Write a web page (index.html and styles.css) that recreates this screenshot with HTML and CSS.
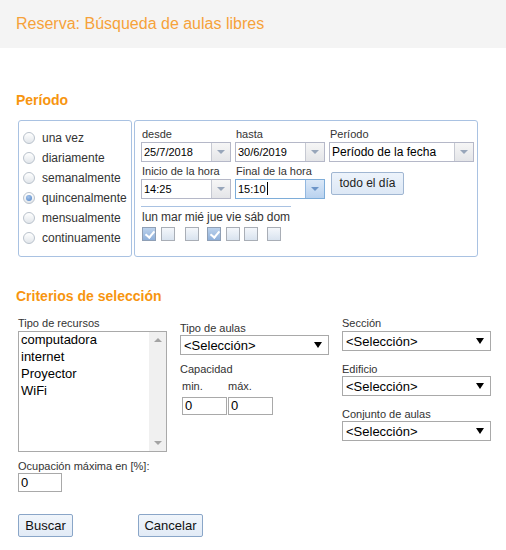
FILE: index.html
```html
<!DOCTYPE html>
<html lang="es">
<head>
<meta charset="utf-8">
<title>Reserva</title>
<link rel="stylesheet" href="styles.css">
</head>
<body>
<div class="header"><h1 class="title">Reserva: Búsqueda de aulas libres</h1></div>

<h2 class="section-title first">Período</h2>
<div class="period-row">
  <div class="box radio-box">
    <label class="radio-item"><span class="radio"></span>una vez</label>
    <label class="radio-item"><span class="radio"></span>diariamente</label>
    <label class="radio-item"><span class="radio"></span>semanalmente</label>
    <label class="radio-item"><span class="radio checked"></span>quincenalmente</label>
    <label class="radio-item"><span class="radio"></span>mensualmente</label>
    <label class="radio-item"><span class="radio"></span>continuamente</label>
  </div>
  <div class="box fields-box">
    <div class="fields-grid">
      <div class="field">
        <div class="flabel">desde</div>
        <div class="combo"><span class="combo-text">25/7/2018</span><span class="combo-btn"><span class="tri"></span></span></div>
      </div>
      <div class="field">
        <div class="flabel">hasta</div>
        <div class="combo"><span class="combo-text">30/6/2019</span><span class="combo-btn"><span class="tri"></span></span></div>
      </div>
      <div class="field">
        <div class="flabel">Período</div>
        <div class="combo"><span class="combo-text big">Período de la fecha</span><span class="combo-btn"><span class="tri"></span></span></div>
      </div>
      <div class="field">
        <div class="flabel">Inicio de la hora</div>
        <div class="combo"><span class="combo-text">14:25</span><span class="combo-btn"><span class="tri"></span></span></div>
      </div>
      <div class="field">
        <div class="flabel">Final de la hora</div>
        <div class="combo focus"><span class="combo-text">15:10<span class="caret"></span></span><span class="combo-btn"><span class="tri"></span></span></div>
      </div>
      <div class="field">
        <button class="btn-day" type="button">todo el día</button>
      </div>
    </div>
    <div class="separator"></div>
    <div class="days">
      <span class="day">lun</span><span class="cb checked"></span>
      <span class="day">mar</span><span class="cb"></span>
      <span class="day">mié</span><span class="cb"></span>
      <span class="day">jue</span><span class="cb checked"></span>
      <span class="day">vie</span><span class="cb"></span>
      <span class="day">sáb</span><span class="cb"></span>
      <span class="day">dom</span><span class="cb"></span>
    </div>
  </div>
</div>

<h2 class="section-title second">Criterios de selección</h2>
<div class="criteria">
  <div class="col col-a">
    <div class="slabel">Tipo de recursos</div>
    <div class="listbox">
      <div class="list-items">
        <div>computadora</div>
        <div>internet</div>
        <div>Proyector</div>
        <div>WiFi</div>
      </div>
      <div class="scrollbar"><span class="sarrow up"></span><span class="sarrow down"></span></div>
    </div>
  </div>
  <div class="col col-b">
    <div class="slabel">Tipo de aulas</div>
    <div class="select"><span>&lt;Selección&gt;</span><span class="sel-arrow"></span></div>
    <div class="slabel cap">Capacidad</div>
    <div class="minmax">
      <div class="mm"><div class="slabel">min.</div><div class="input">0</div></div>
      <div class="mm"><div class="slabel">máx.</div><div class="input">0</div></div>
    </div>
  </div>
  <div class="col col-c">
    <div class="slabel">Sección</div>
    <div class="select"><span>&lt;Selección&gt;</span><span class="sel-arrow"></span></div>
    <div class="slabel gap">Edificio</div>
    <div class="select"><span>&lt;Selección&gt;</span><span class="sel-arrow"></span></div>
    <div class="slabel gap">Conjunto de aulas</div>
    <div class="select"><span>&lt;Selección&gt;</span><span class="sel-arrow"></span></div>
  </div>
</div>

<div class="occupancy">
  <div class="slabel">Ocupación máxima en [%]:</div>
  <div class="input occ">0</div>
</div>

<div class="actions">
  <button class="btn" type="button">Buscar</button>
  <button class="btn cancel" type="button">Cancelar</button>
</div>
</body>
</html>
```
FILE: styles.css
```css
* { box-sizing: border-box; }
body {
  margin: 0;
  font-family: "Liberation Sans", Arial, sans-serif;
  color: #333;
  background: #fff;
}
.header {
  height: 48px;
  background: #f4f4f4;
  padding-left: 16px;
}
.title {
  margin: 0;
  font-size: 16px;
  font-weight: normal;
  line-height: 48px;
  color: #f6a23a;
}
.section-title {
  margin: 0 0 0 16px;
  font-size: 14px;
  font-weight: bold;
  line-height: 16px;
  color: #f7950f;
}
.section-title.first { margin-top: 44px; margin-bottom: 12px; }
.section-title.second { margin-top: 31px; margin-bottom: 12px; }

.period-row {
  display: flex;
  gap: 2px;
  margin-left: 18px;
  height: 137px;
}
.box {
  border: 1px solid #a9c2e2;
  border-radius: 3px;
}
.radio-box {
  width: 114px;
  padding: 7px 0 0 4px;
}
.radio-item {
  display: flex;
  align-items: center;
  height: 20px;
  font-size: 12px;
  color: #333;
}
.radio {
  width: 12px;
  height: 12px;
  border-radius: 50%;
  border: 1px solid #b9c2cc;
  background: linear-gradient(#ffffff, #e2e6eb);
  margin-right: 7px;
  position: relative;
  flex: none;
}
.radio.checked::after {
  content: "";
  position: absolute;
  left: 2px;
  top: 2px;
  width: 6px;
  height: 6px;
  border-radius: 50%;
  background: radial-gradient(circle at 40% 35%, #a6c4ea, #4f83c6);
}
.fields-box {
  width: 344px;
  padding: 6px 0 0 6px;
}
.fields-grid {
  display: grid;
  grid-template-columns: 90px 90px 145px;
  column-gap: 4px;
  row-gap: 2px;
}
.flabel {
  font-size: 11px;
  line-height: 15px;
  padding-left: 1px;
  color: #333;
}
.combo {
  display: flex;
  height: 20px;
  border: 1px solid #b5b8c8;
  background: #fff;
}
.combo-text {
  flex: 1;
  font-size: 11px;
  line-height: 18px;
  padding-left: 2px;
  color: #000;
  white-space: nowrap;
  overflow: hidden;
}
.combo-text.big { font-size: 12px; }
.combo-btn {
  width: 19px;
  border-left: 1px solid #c6c9d2;
  background: linear-gradient(#f6f6f6, #e4e5e8);
  display: flex;
  align-items: center;
  justify-content: center;
}
.tri {
  width: 0;
  height: 0;
  border-left: 4px solid transparent;
  border-right: 4px solid transparent;
  border-top: 4px solid #98a6ba;
}
.combo.focus { border-color: #7eadd9; }
.combo.focus .combo-btn {
  border-left-color: #93b8e0;
  background: linear-gradient(#dbe8f7, #b9d2ef);
}
.combo.focus .tri { border-top-color: #6d95c8; }
.caret {
  display: inline-block;
  width: 1px;
  height: 13px;
  background: #000;
  vertical-align: -2px;
  margin-left: 1px;
}
.btn-day {
  margin: 8px 0 0 2px;
  width: 73px;
  height: 23px;
  font-family: inherit;
  font-size: 12px;
  color: #222;
  border: 1px solid #a0b6d2;
  border-radius: 2px;
  background: linear-gradient(#edf3fb, #dde8f5);
  padding: 0 0 2px 0;
}
.separator {
  width: 150px;
  height: 1px;
  background: #a9c2e2;
  margin-top: 7px;
}
.days {
  display: inline-grid;
  grid-auto-flow: column;
  grid-template-rows: 16px 14px;
  column-gap: 3px;
  row-gap: 2px;
  margin-top: 1px;
  padding-left: 1px;
}
.day {
  font-size: 12px;
  line-height: 16px;
  color: #333;
}
.cb {
  width: 14px;
  height: 14px;
  border: 1px solid #a9aeb6;
  background: linear-gradient(#f4f7fb, #d9e3ef);
  position: relative;
}
.cb.checked {
  background: linear-gradient(#bcd2ec, #8fb0da);
  border-color: #8f9fb5;
}
.cb.checked::after {
  content: "";
  position: absolute;
  left: 4px;
  top: 1px;
  width: 4px;
  height: 7px;
  border-right: 2px solid #fff;
  border-bottom: 2px solid #fff;
  transform: rotate(40deg);
}

.criteria {
  display: grid;
  grid-template-columns: 149px 149px 149px;
  column-gap: 13px;
  margin-left: 18px;
  align-items: start;
}
.slabel {
  font-size: 11px;
  line-height: 14px;
  color: #333;
}
.col-b { padding-top: 5px; }
.listbox {
  margin-top: 1px;
  height: 121px;
  border: 1px solid #a9a9a9;
  display: flex;
}
.list-items {
  flex: 1;
  padding: 0 0 0 2px;
  font-size: 13px;
  line-height: 15px;
  color: #000;
}
.list-items div { padding-bottom: 2px; }
.scrollbar {
  width: 17px;
  background: #f0f0f0;
  position: relative;
}
.sarrow {
  position: absolute;
  left: 5px;
  width: 0;
  height: 0;
  border-left: 4px solid transparent;
  border-right: 4px solid transparent;
}
.sarrow.up { top: 6px; border-bottom: 4px solid #a3a3a3; }
.sarrow.down { bottom: 6px; border-top: 4px solid #a3a3a3; }
.select {
  height: 20px;
  border: 1px solid #a9a9a9;
  background: #fff;
  display: flex;
  align-items: center;
  justify-content: space-between;
  padding: 0 6px 0 3px;
  font-size: 13px;
  color: #000;
}
.sel-arrow {
  width: 0;
  height: 0;
  border-left: 4px solid transparent;
  border-right: 4px solid transparent;
  border-top: 6px solid #000;
}
.col-c .slabel.gap { margin-top: 11px; }
.col-c .slabel:first-child { margin-bottom: 1px; }
.slabel.cap { margin-top: 7px; }
.minmax {
  display: flex;
  gap: 1px;
  padding-left: 2px;
  margin-top: 3px;
}
.mm .slabel { margin-bottom: 4px; }
.input {
  width: 45px;
  height: 18px;
  border: 1px solid #a9a9a9;
  background: #fff;
  font-size: 13px;
  line-height: 16px;
  padding-left: 2px;
  color: #000;
}
.occupancy {
  margin: 7px 0 0 18px;
}
.input.occ {
  width: 44px;
  height: 19px;
  line-height: 17px;
  margin-top: 0;
}
.actions {
  display: flex;
  margin: 22px 0 0 18px;
}
.btn {
  width: 55px;
  height: 23px;
  font-family: inherit;
  font-size: 13px;
  color: #111;
  border: 1px solid #8aa6c8;
  border-radius: 2px;
  background: linear-gradient(#f0f5fb, #e2ebf6);
  padding: 0;
}
.btn.cancel {
  width: 65px;
  margin-left: 65px;
}
```
